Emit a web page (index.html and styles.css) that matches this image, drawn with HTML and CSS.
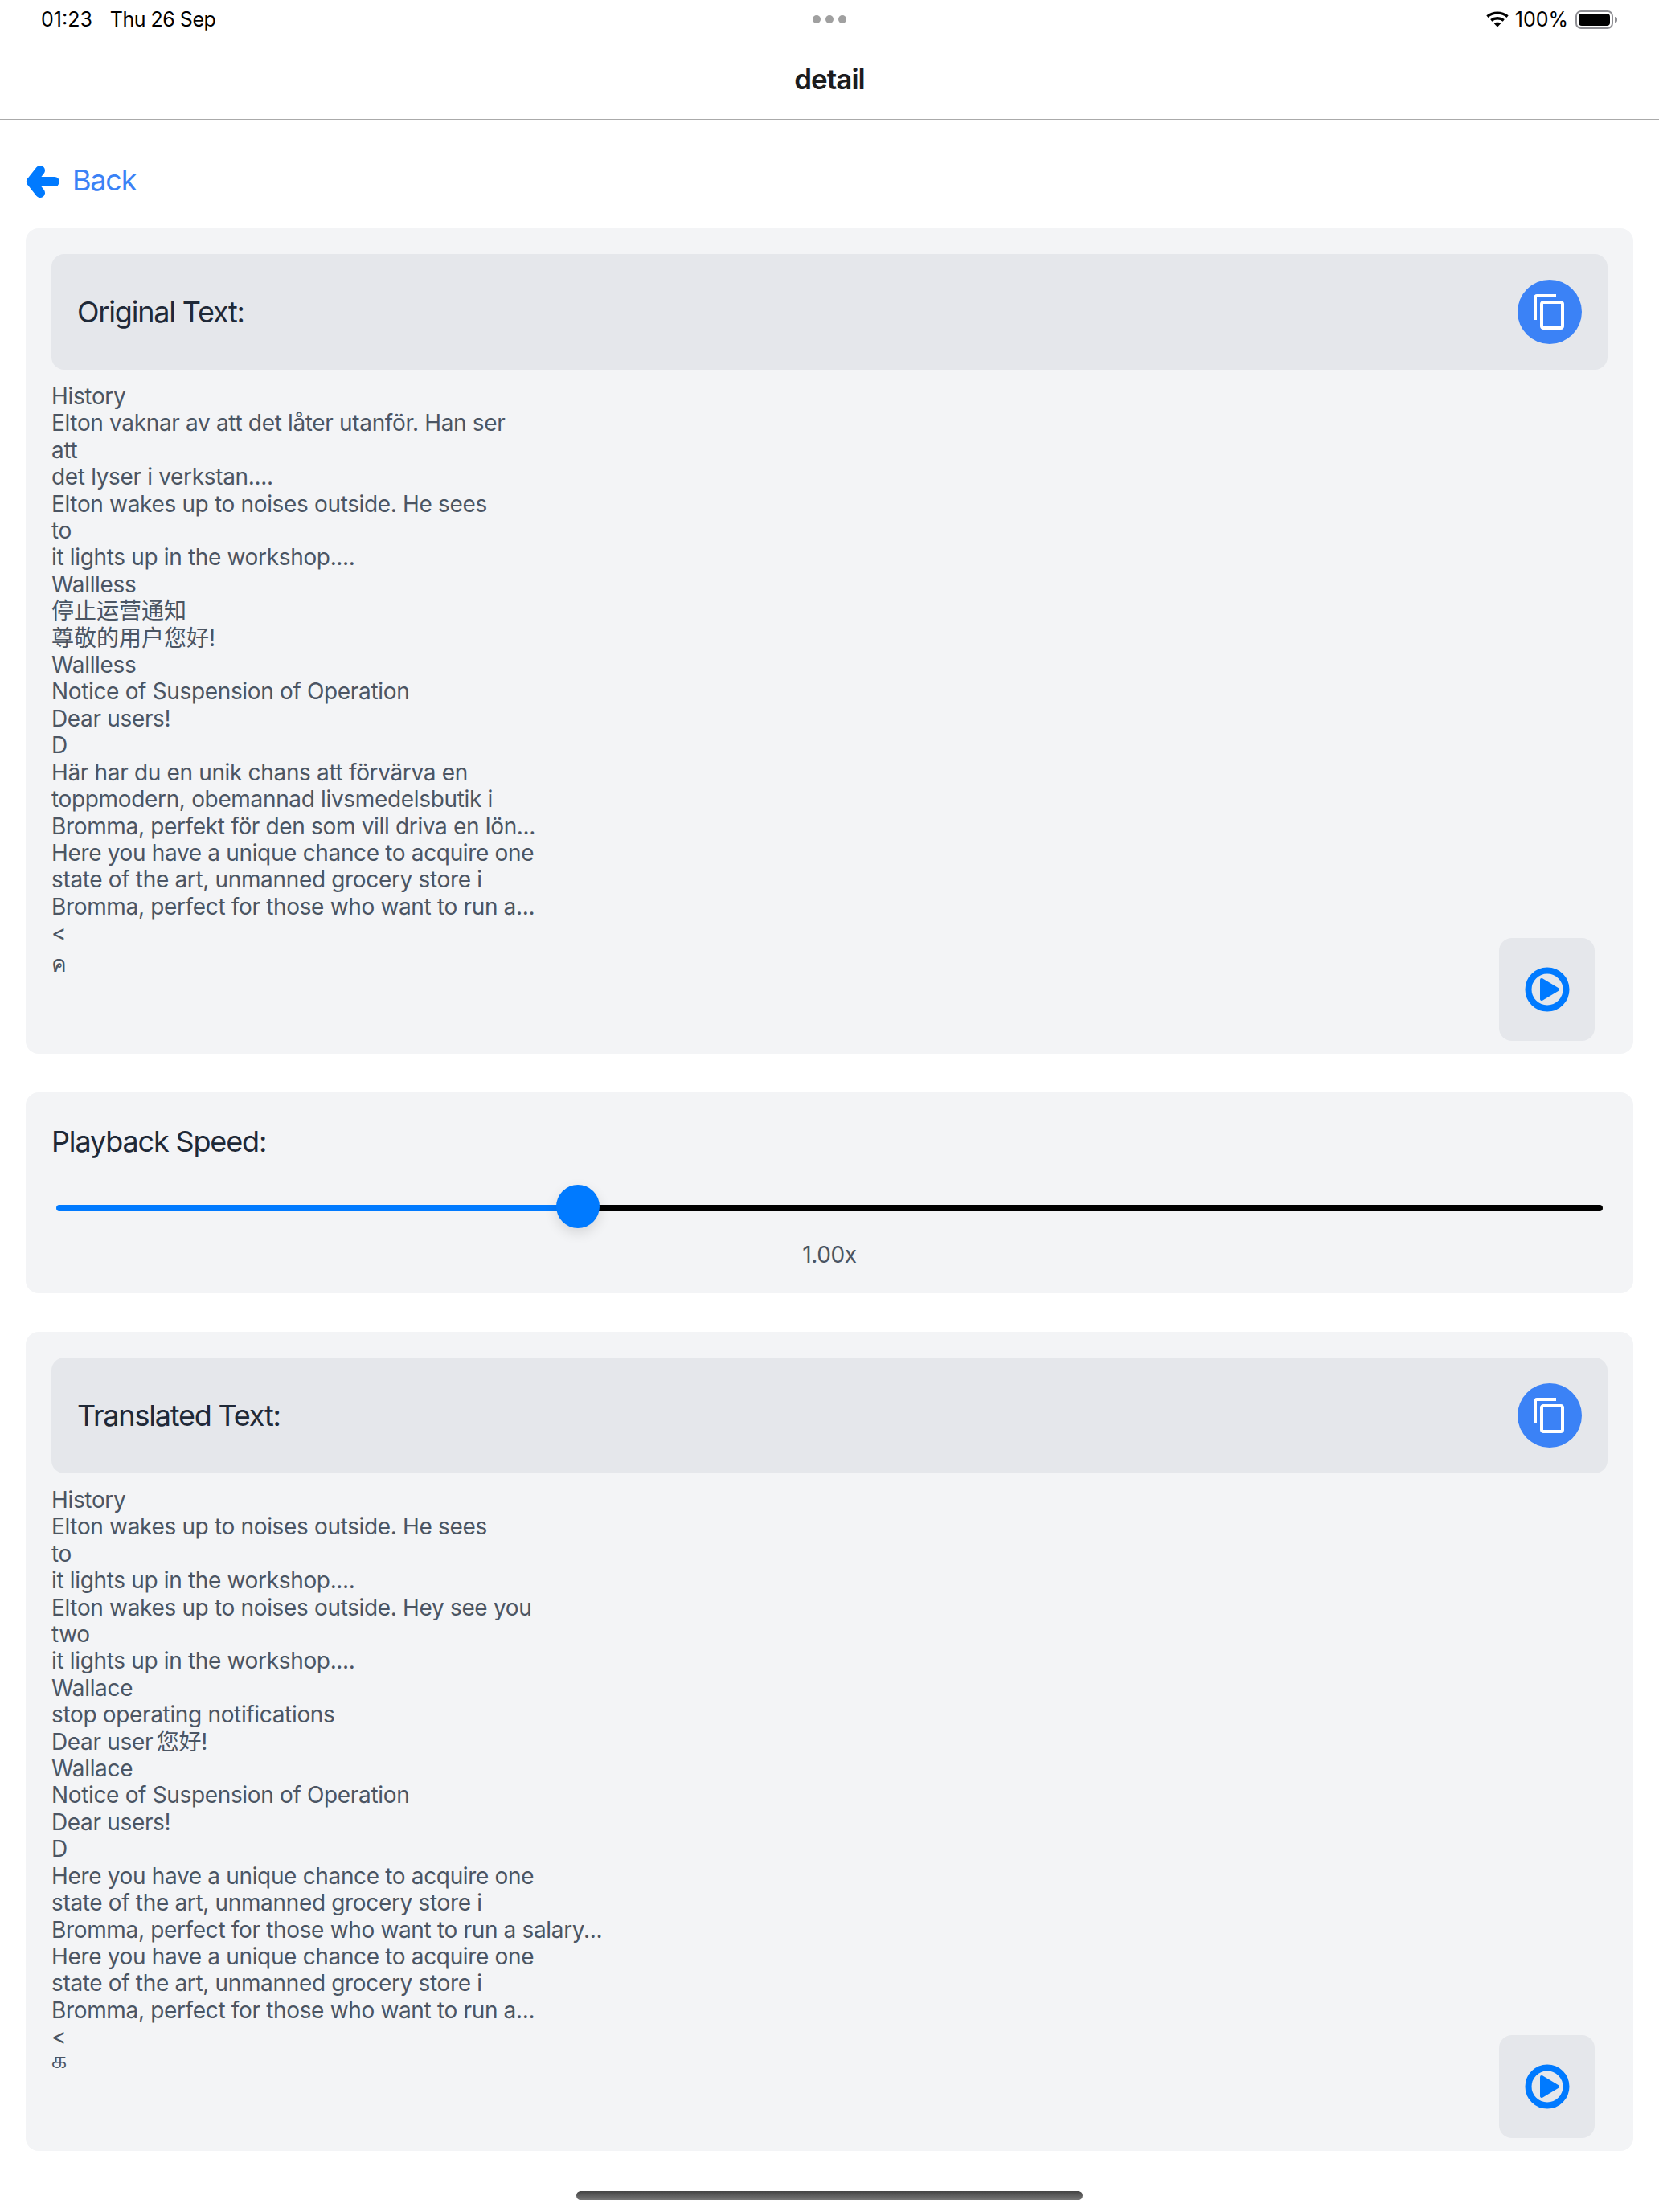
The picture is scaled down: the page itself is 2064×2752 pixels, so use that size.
FILE: index.html
```html
<!DOCTYPE html>
<html lang="en">
<head>
  <meta charset="UTF-8">
  <meta name="viewport" content="width=device-width, initial-scale=1.0">
  <title>detail</title>
  <link rel="stylesheet" href="styles.css">
</head>
<body>
  <!-- status bar -->
  <div class="status-bar">
    <div class="status-left"><span>01:23</span><span class="status-date">Thu 26 Sep</span></div>
    <div class="status-dots"><i></i><i></i><i></i></div>
    <div class="status-right">
      <svg class="wifi" viewBox="0 0 28 20" fill="none" stroke="#000" stroke-width="3.4">
        <path d="M1.4 6.6C8.6 0.6 19.4 0.6 26.6 6.6"/>
        <path d="M6.2 11.4C10.8 7.8 17.2 7.8 21.8 11.4"/>
        <path d="M14 19.4 9.8 15.2C12.2 13.4 15.8 13.4 18.2 15.2Z" fill="#000" stroke="none"/>
      </svg>
      <span>100%</span>
      <div class="battery"><div class="battery-body"><div class="battery-fill"></div></div><div class="battery-cap"></div></div>
    </div>
  </div>

  <div class="nav-bar">detail</div>

  <div class="content">
    <div class="back-row">
      <svg class="back-icon" viewBox="0 0 42 42" fill="none" stroke="#007aff" stroke-width="12" stroke-linecap="round" stroke-linejoin="round">
        <path d="M18 7 7 21 18 35"/>
        <path d="M7 21H36"/>
      </svg>
      <span class="back-text">Back</span>
    </div>

    <div class="card card-text">
      <div class="card-header">
        <span class="card-title">Original Text:</span>
        <div class="copy-btn">
          <svg viewBox="0 0 24 24" width="48" height="48" fill="#fff"><path d="M16 1H4c-1.1 0-2 .9-2 2v14h2V3h12V1zm3 4H8c-1.1 0-2 .9-2 2v14c0 1.1.9 2 2 2h11c1.1 0 2-.9 2-2V7c0-1.1-.9-2-2-2zm0 16H8V7h11v14z"/></svg>
        </div>
      </div>
      <div class="body-text">History
Elton vaknar av att det låter utanför. Han ser
att
det lyser i verkstan....
Elton wakes up to noises outside. He sees
to
it lights up in the workshop....
Wallless
<span class="cjk">停止运营通知</span>
<span class="cjk">尊敬的用户您好!</span>
Wallless
Notice of Suspension of Operation
Dear users!
D
Här har du en unik chans att förvärva en
toppmodern, obemannad livsmedelsbutik i
Bromma, perfekt för den som vill driva en lön...
Here you have a unique chance to acquire one
state of the art, unmanned grocery store i
Bromma, perfect for those who want to run a...
&lt;
<span class="thai-line">ค</span></div>
      <div class="play-btn">
        <svg viewBox="0 0 60 60" width="60" height="60" fill="none" stroke="#007aff">
          <circle cx="30" cy="30" r="23.5" stroke-width="8"/>
          <path d="M23 18 43 30 23 42Z" fill="#007aff" stroke-width="4" stroke-linejoin="round"/>
        </svg>
      </div>
    </div>

    <div class="card card-speed">
      <div class="speed-title">Playback Speed:</div>
      <div class="slider">
        <div class="slider-fill"></div>
        <div class="slider-rest"></div>
        <div class="slider-thumb"></div>
      </div>
      <div class="speed-value">1.00x</div>
    </div>

    <div class="card card-text">
      <div class="card-header">
        <span class="card-title">Translated Text:</span>
        <div class="copy-btn">
          <svg viewBox="0 0 24 24" width="48" height="48" fill="#fff"><path d="M16 1H4c-1.1 0-2 .9-2 2v14h2V3h12V1zm3 4H8c-1.1 0-2 .9-2 2v14c0 1.1.9 2 2 2h11c1.1 0 2-.9 2-2V7c0-1.1-.9-2-2-2zm0 16H8V7h11v14z"/></svg>
        </div>
      </div>
      <div class="body-text">History
Elton wakes up to noises outside. He sees
to
it lights up in the workshop....
Elton wakes up to noises outside. Hey see you
two
it lights up in the workshop....
Wallace
stop operating notifications
Dear user&#8201;您好!
Wallace
Notice of Suspension of Operation
Dear users!
D
Here you have a unique chance to acquire one
state of the art, unmanned grocery store i
Bromma, perfect for those who want to run a salary...
Here you have a unique chance to acquire one
state of the art, unmanned grocery store i
Bromma, perfect for those who want to run a...
&lt;
<span class="tamil-line">க</span></div>
      <div class="play-btn">
        <svg viewBox="0 0 60 60" width="60" height="60" fill="none" stroke="#007aff">
          <circle cx="30" cy="30" r="23.5" stroke-width="8"/>
          <path d="M23 18 43 30 23 42Z" fill="#007aff" stroke-width="4" stroke-linejoin="round"/>
        </svg>
      </div>
    </div>
  </div>

  <div class="home-indicator"></div>
</body>
</html>
```

FILE: styles.css
```css
body {
  font-family: Inter, "Noto Sans", "Noto Sans CJK SC", "DejaVu Sans", sans-serif;
  margin: 0;
  padding: 0;
  background-color: #fff;
  color: #000;
  width: 2064px;
  height: 2752px;
  overflow: hidden;
}

/* status bar */
.status-bar {
  height: 48px;
  padding: 0 52px 0 51px;
  display: grid;
  grid-template-columns: 1fr auto 1fr;
  align-items: center;
  font-size: 25px;
}
.status-left {
  display: flex;
  gap: 22px;
}
.status-date {
  letter-spacing: -0.5px;
}
.status-dots {
  display: flex;
  gap: 6px;
}
.status-dots i {
  width: 10px;
  height: 10px;
  border-radius: 50%;
  background: #a0a0a0;
}
.status-right {
  display: flex;
  align-items: center;
  justify-content: flex-end;
  gap: 8px;
}
.wifi {
  width: 28px;
  height: 20px;
}
.battery {
  display: flex;
  align-items: center;
  margin-left: 1px;
}
.battery-body {
  width: 39px;
  height: 15px;
  border: 2px solid #8e8e93;
  border-radius: 7px;
  padding: 2px;
}
.battery-fill {
  height: 100%;
  background: #000;
  border-radius: 4px;
}
.battery-cap {
  width: 3px;
  height: 7px;
  margin-left: 2px;
  background: #8e8e93;
  border-radius: 0 3px 3px 0;
}

.nav-bar {
  height: 101px;
  box-sizing: border-box;
  border-bottom: 1px solid #aaa;
  display: flex;
  align-items: center;
  justify-content: center;
  font-size: 35px;
  font-weight: 600;
  letter-spacing: -1px;
  color: #1c1c1e;
}

.content {
  padding: 35px 32px 0;
  display: flex;
  flex-direction: column;
}

.back-row {
  display: flex;
  align-items: center;
  height: 80px;
  margin-bottom: 20px;
  gap: 16px;
}
.back-icon {
  width: 42px;
  height: 42px;
  margin-top: 4px;
}
.back-text {
  font-size: 36px;
  letter-spacing: -1.2px;
  color: #3b82f6;
}

/* cards */
.card {
  background: #f3f4f6;
  border-radius: 16px;
  padding: 32px;
  margin-bottom: 48px;
  position: relative;
}
.card-text {
  height: 1027px;
  box-sizing: border-box;
}
.card-speed {
  height: 250px;
  box-sizing: border-box;
}
.card-text:last-child {
  height: 1019px;
  margin-bottom: 0;
}
.card-header {
  height: 144px;
  box-sizing: border-box;
  padding: 0 32px;
  background: #e5e7eb;
  border-radius: 16px;
  display: flex;
  align-items: center;
  justify-content: space-between;
  margin-bottom: 17px;
}
.card-title {
  font-size: 36px;
  letter-spacing: -1.2px;
  color: #1f2937;
}
.copy-btn {
  width: 80px;
  height: 80px;
  border-radius: 50%;
  background: #3b82f6;
  display: flex;
  align-items: center;
  justify-content: center;
}
.body-text {
  white-space: pre-line;
  font-size: 28px;
  line-height: 33.4px;
  letter-spacing: -0.34px;
  color: #4b5563;
}
.cjk {
  letter-spacing: 0;
}
/* the last glyph of each text sits off the regular line grid */
.thai-line {
  display: block;
  line-height: 41px;
}
.tamil-line {
  display: block;
  font-size: 30px;
  line-height: 19px;
  margin-top: 1px;
}
.play-btn {
  position: absolute;
  right: 48px;
  bottom: 16px;
  width: 119px;
  height: 128px;
  background: #e5e7eb;
  border-radius: 16px;
  display: flex;
  align-items: center;
  justify-content: center;
}

/* speed slider */
.speed-title {
  font-size: 36px;
  line-height: 58px;
  letter-spacing: -1.15px;
  color: #1f2937;
}
.slider {
  position: relative;
  height: 54px;
  margin-top: 25px;
}
.slider-fill {
  position: absolute;
  left: 6px;
  top: 25px;
  width: 660px;
  height: 8px;
  border-radius: 4px 0 0 4px;
  background: #007aff;
}
.slider-rest {
  position: absolute;
  left: 660px;
  right: 6px;
  top: 25px;
  height: 8px;
  border-radius: 0 4px 4px 0;
  background: #000;
}
.slider-thumb {
  position: absolute;
  left: 628px;
  top: 0;
  width: 54px;
  height: 54px;
  border-radius: 50%;
  background: #007aff;
  box-shadow: 0 6px 16px rgba(0, 0, 0, 0.12);
}
.speed-value {
  text-align: center;
  font-size: 28px;
  line-height: 34px;
  margin-top: 16px;
  letter-spacing: -0.34px;
  color: #4b5563;
}

.home-indicator {
  position: absolute;
  left: 717px;
  top: 2726px;
  width: 630px;
  height: 11px;
  border-radius: 6px;
  background: linear-gradient(#444, #777);
}
```
